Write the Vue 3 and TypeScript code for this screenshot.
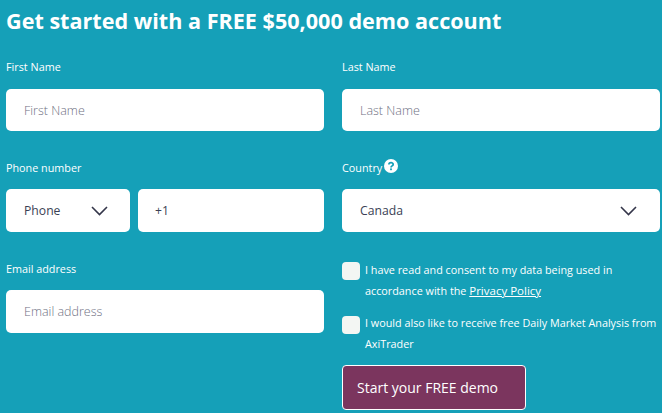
<script setup lang="ts">
const chevronPath = "M1 1 L8.5 8.5 L16 1";
</script>

<template>
  <form class="page" @submit.prevent>
    <h1 class="title">Get started with a FREE $50,000 demo account</h1>
    <div class="grid">
      <div class="field">
        <label class="label wide">First Name</label>
        <div class="box"><span class="ph">First Name</span></div>
      </div>
      <div class="field">
        <label class="label wide">Last Name</label>
        <div class="box"><span class="ph">Last Name</span></div>
      </div>

      <div class="field">
        <label class="label">Phone number</label>
        <div class="phone">
          <div class="box tall code">
            <span class="val">Phone</span>
            <svg class="chev" width="17" height="10" viewBox="0 0 17 10"><path :d="chevronPath" /></svg>
          </div>
          <div class="box tall num"><span class="val">+1</span></div>
        </div>
      </div>
      <div class="field">
        <label class="label">Country
          <svg class="help" width="14" height="14" viewBox="0 0 14 14">
            <circle cx="7" cy="7" r="7" fill="#fff" />
            <path d="M4.9 5.4 C4.9 3.1 9.2 3.1 9.2 5.4 C9.2 7 7 6.8 7 8.4" fill="none" stroke="#15a0b8" stroke-width="1.7" />
            <rect x="6.1" y="9.4" width="1.8" height="1.8" fill="#15a0b8" />
          </svg>
        </label>
        <div class="box tall country">
          <span class="val">Canada</span>
          <svg class="chev" width="17" height="10" viewBox="0 0 17 10"><path :d="chevronPath" /></svg>
        </div>
      </div>

      <div class="field">
        <label class="label">Email address</label>
        <div class="box tall"><span class="ph">Email address</span></div>
      </div>
      <div class="consents">
        <div class="check">
          <span class="tick"></span>
          <p>I have read and consent to my data being used in accordance with the <a class="link" href="#">Privacy Policy</a></p>
        </div>
        <div class="check second">
          <span class="tick"></span>
          <p>I would also like to receive free Daily Market Analysis from AxiTrader</p>
        </div>
        <button class="cta" type="submit">Start your FREE demo</button>
      </div>
    </div>
  </form>
</template>

<style>
html, body { margin: 0; background: #15a0b8; }
</style>

<style scoped>
.page {
  box-sizing: border-box;
  width: 662px;
  height: 413px;
  overflow: hidden;
  padding: 0 2px 0 6px;
  background: #15a0b8;
  color: #fff;
  font-family: "Open Sans", sans-serif;
}
.title {
  margin: 0 0 15px;
  height: 42px;
  font-size: 21.6px;
  line-height: 42px;
  font-weight: 700;
  white-space: nowrap;
}
.grid {
  display: grid;
  grid-template-columns: 318px 318px;
  column-gap: 18px;
  row-gap: 27px;
  align-items: start;
}
.field { display: flex; flex-direction: column; }
.label {
  display: flex;
  align-items: center;
  gap: 2px;
  height: 20px;
  margin-bottom: 11px;
  font-size: 10.8px;
  line-height: 20px;
}
.label.wide { margin-bottom: 12px; }
.box {
  box-sizing: border-box;
  display: flex;
  align-items: center;
  height: 42px;
  padding: 0 18px;
  border-radius: 5px;
  background: #fff;
  font-size: 12.5px;
  color: #3b3f55;
}
.box.tall { height: 43px; }
.ph { color: #6f7183; font-weight: 300; }
.phone { display: flex; gap: 8px; }
.code { width: 124px; flex: none; justify-content: space-between; padding-right: 22px; }
.num { flex: 1; padding-left: 17px; }
.country { justify-content: space-between; padding-right: 23px; }
.val { font-size: 12.2px; }
.chev { display: block; flex: none; }
.chev path { fill: none; stroke: #34364a; stroke-width: 1.6; }
.help { margin-top: -4px; }
.check { display: flex; gap: 5px; align-items: flex-start; }
.second { margin-top: 11px; }
.tick {
  flex: none;
  box-sizing: border-box;
  width: 18px;
  height: 18px;
  margin-top: 3px;
  border-radius: 4px;
  background: #f3f6f3;
}
.second .tick { margin-top: 4px; }
.check p {
  margin: 0;
  font-size: 10.8px;
  line-height: 21px;
}
.link { color: #fff; text-decoration: underline; font-size: 11.5px; }
.cta {
  display: block;
  box-sizing: border-box;
  width: 184px;
  height: 45px;
  margin-top: 11px;
  padding: 0 0 0 14px;
  text-align: left;
  border: 1px solid #fff;
  border-radius: 4px;
  background: #7b355e;
  color: #fff;
  font-family: inherit;
  font-size: 14px;
}
</style>
